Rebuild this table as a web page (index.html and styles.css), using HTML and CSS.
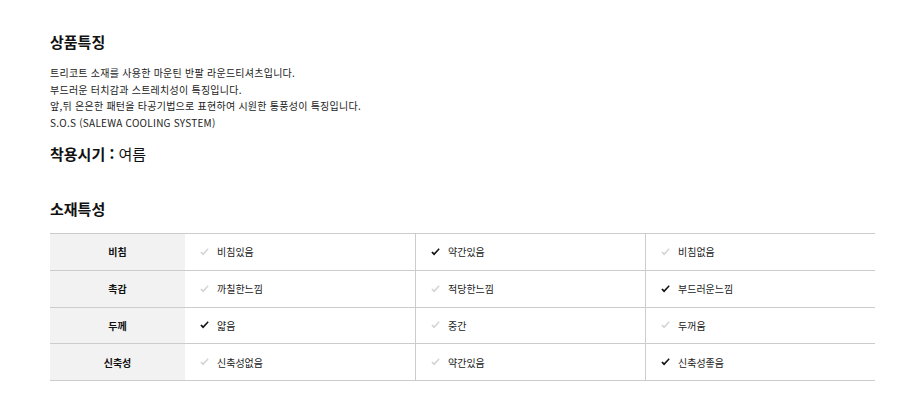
FILE: index.html
```html
<!DOCTYPE html>
<html lang="ko">
<head>
<meta charset="utf-8">
<link rel="stylesheet" href="styles.css">
</head>
<body>
<div class="page">
  <h2 class="title">상품특징</h2>
  <div class="desc">
    <p>트리코트 소재를 사용한 마운틴 반팔 라운드티셔츠입니다.</p>
    <p>부드러운 터치감과 스트레치성이 특징입니다.</p>
    <p>앞,뒤 은은한 패턴을 타공기법으로 표현하여 시원한 통풍성이 특징입니다.</p>
    <p>S.O.S (SALEWA COOLING SYSTEM)</p>
  </div>
  <div class="season"><b>착용시기 :</b> 여름</div>
  <h2 class="title title2">소재특성</h2>
  <div class="grid">
    <div class="th">비침</div>
    <div class="td"><svg class="ck off" viewBox="0 0 9 8"><path d="M0.3 4.6 L1.6 3.4 L3.1 5.0 L7.7 0.3 L8.7 1.3 L3.1 7.6 Z"/></svg>비침있음</div>
    <div class="td sep"><svg class="ck on" viewBox="0 0 9 8"><path d="M0.3 4.6 L1.6 3.4 L3.1 5.0 L7.7 0.3 L8.7 1.3 L3.1 7.6 Z"/></svg>약간있음</div>
    <div class="td sep"><svg class="ck off" viewBox="0 0 9 8"><path d="M0.3 4.6 L1.6 3.4 L3.1 5.0 L7.7 0.3 L8.7 1.3 L3.1 7.6 Z"/></svg>비침없음</div>

    <div class="th">촉감</div>
    <div class="td"><svg class="ck off" viewBox="0 0 9 8"><path d="M0.3 4.6 L1.6 3.4 L3.1 5.0 L7.7 0.3 L8.7 1.3 L3.1 7.6 Z"/></svg>까칠한느낌</div>
    <div class="td sep"><svg class="ck off" viewBox="0 0 9 8"><path d="M0.3 4.6 L1.6 3.4 L3.1 5.0 L7.7 0.3 L8.7 1.3 L3.1 7.6 Z"/></svg>적당한느낌</div>
    <div class="td sep"><svg class="ck on" viewBox="0 0 9 8"><path d="M0.3 4.6 L1.6 3.4 L3.1 5.0 L7.7 0.3 L8.7 1.3 L3.1 7.6 Z"/></svg>부드러운느낌</div>

    <div class="th">두께</div>
    <div class="td"><svg class="ck on" viewBox="0 0 9 8"><path d="M0.3 4.6 L1.6 3.4 L3.1 5.0 L7.7 0.3 L8.7 1.3 L3.1 7.6 Z"/></svg>얇음</div>
    <div class="td sep"><svg class="ck off" viewBox="0 0 9 8"><path d="M0.3 4.6 L1.6 3.4 L3.1 5.0 L7.7 0.3 L8.7 1.3 L3.1 7.6 Z"/></svg>중간</div>
    <div class="td sep"><svg class="ck off" viewBox="0 0 9 8"><path d="M0.3 4.6 L1.6 3.4 L3.1 5.0 L7.7 0.3 L8.7 1.3 L3.1 7.6 Z"/></svg>두꺼움</div>

    <div class="th">신축성</div>
    <div class="td"><svg class="ck off" viewBox="0 0 9 8"><path d="M0.3 4.6 L1.6 3.4 L3.1 5.0 L7.7 0.3 L8.7 1.3 L3.1 7.6 Z"/></svg>신축성없음</div>
    <div class="td sep"><svg class="ck off" viewBox="0 0 9 8"><path d="M0.3 4.6 L1.6 3.4 L3.1 5.0 L7.7 0.3 L8.7 1.3 L3.1 7.6 Z"/></svg>약간있음</div>
    <div class="td sep"><svg class="ck on" viewBox="0 0 9 8"><path d="M0.3 4.6 L1.6 3.4 L3.1 5.0 L7.7 0.3 L8.7 1.3 L3.1 7.6 Z"/></svg>신축성좋음</div>
  </div>
</div>
</body>
</html>
```

FILE: styles.css
```css
* { box-sizing: border-box; }
html, body { margin: 0; padding: 0; background: #fff; }
body {
  font-family: "Noto Sans CJK KR", "Noto Sans", sans-serif;
  color: #222;
}
.page {
  padding: 32px 0 0 50px;
  width: 875px;
}
.title {
  margin: 0;
  font-size: 15px;
  line-height: 20px;
  font-weight: 700;
  color: #111;
}
.desc {
  margin-top: 13px;
  font-size: 10px;
  line-height: 16.5px;
  letter-spacing: 0.25px;
  color: #222;
}
.desc p { margin: 0; }
.season {
  margin-top: 13px;
  font-size: 15px;
  line-height: 20px;
  color: #111;
}
.season b { font-weight: 700; }
.title2 { margin-top: 35px; }
.grid {
  margin-top: 14px;
  display: grid;
  grid-template-columns: 135px 230px 230px 230px;
  grid-auto-rows: 36.75px;
  border-top: 1px solid #cccccc;
}
.th, .td {
  border-bottom: 1px solid #cccccc;
  display: flex;
  align-items: center;
  font-size: 10px;
  color: #222;
}
.th {
  background: #f2f2f2;
  justify-content: center;
  font-weight: 700;
  color: #111;
}
.td { padding-left: 15px; }
.td.sep { border-left: 1px solid #cccccc; }
.ck {
  width: 9px;
  height: 8px;
  margin-right: 8px;
  flex: none;
}
.ck.on { fill: #111; }
.ck.off { fill: #d4d4d4; }
```
